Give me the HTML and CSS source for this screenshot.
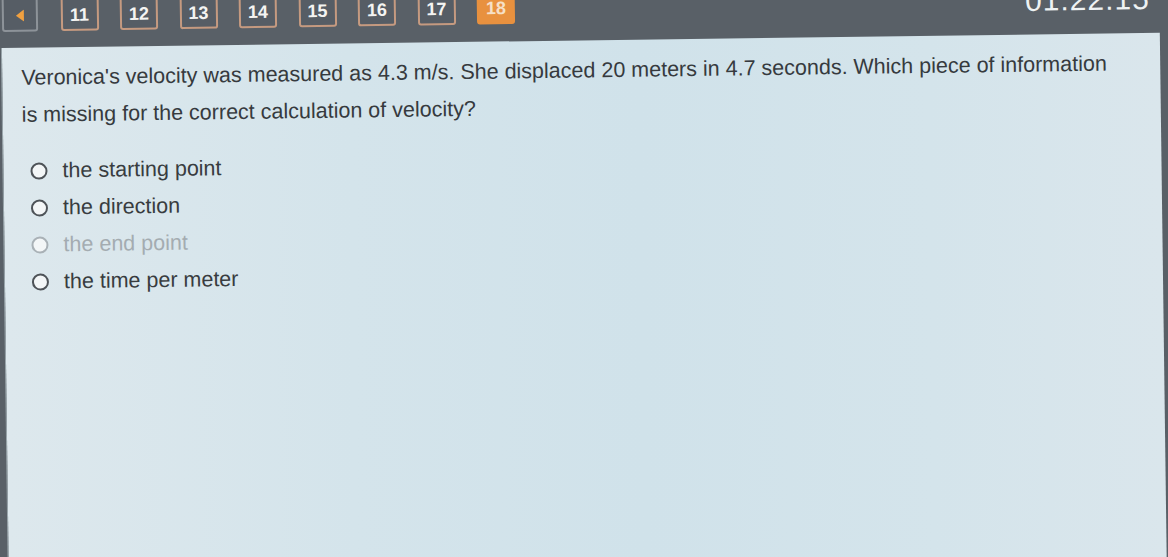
FILE: index.html
```html
<!DOCTYPE html>
<html lang="en">
<head>
<meta charset="utf-8">
<title>Question 18</title>
<link rel="stylesheet" href="styles.css">
</head>
<body>
<header class="topbar">
  <nav class="pager">
    <button class="pg back" aria-label="Previous"><svg width="10" height="12" viewBox="0 0 10 12"><polygon points="9,0 9,12 1,6" fill="#f0a040"/></svg></button>
    <button class="pg num">11</button>
    <button class="pg num">12</button>
    <button class="pg num">13</button>
    <button class="pg num">14</button>
    <button class="pg num">15</button>
    <button class="pg num">16</button>
    <button class="pg num">17</button>
    <button class="pg num current">18</button>
  </nav>
  <div class="timer">01:22:15</div>
</header>
<main class="card">
  <p class="question">Veronica's velocity was measured as 4.3 m/s. She displaced 20 meters in 4.7 seconds. Which piece of information is missing for the correct calculation of velocity?</p>
  <ul class="options">
    <li class="option"><span class="radio"></span><span>the starting point</span></li>
    <li class="option"><span class="radio"></span><span>the direction</span></li>
    <li class="option faded"><span class="radio"></span><span>the end point</span></li>
    <li class="option"><span class="radio"></span><span>the time per meter</span></li>
  </ul>
</main>
</body>
</html>
```
FILE: styles.css
```css
html, body {
  margin: 0;
  padding: 0;
}
body {
  width: 1168px;
  height: 557px;
  overflow: hidden;
  background: #596067;
  font-family: "Liberation Sans", Arial, sans-serif;
}
.topbar {
  height: 44px;
  display: flex;
  justify-content: space-between;
  align-items: flex-start;
  transform: rotate(-0.9deg);
  transform-origin: 0 50%;
}
.pager {
  display: flex;
  gap: 21.5px;
  margin-top: -6px;
  padding-left: 2px;
}
.pg {
  box-sizing: border-box;
  width: 38px;
  height: 38px;
  border-radius: 3px;
  background: #565d65;
  color: #f4f4f2;
  font-family: "Liberation Sans", Arial, sans-serif;
  font-weight: bold;
  font-size: 18px;
  display: flex;
  align-items: center;
  justify-content: center;
  padding: 6px 0 0;
  margin: 0;
}
.back {
  width: 36px;
  border: 2px solid #8d9399;
  margin-right: 1px;
}
.num {
  border: 2px solid #c59a80;
}
.current {
  background: #e8913f;
  border-color: #e8913f;
  color: #f6e0c8;
}
.timer {
  margin-top: 2px;
  margin-right: 18px;
  color: #eef2f3;
  font-size: 30px;
  line-height: 30px;
  letter-spacing: 1px;
}
.card {
  margin-left: 5px;
  margin-top: 4px;
  width: 1159px;
  height: 570px;
  box-sizing: border-box;
  padding: 12px 17px 0 19px;
  background: linear-gradient(90deg, #dde8ed 0%, #d4e4eb 30%, #d0e2ea 55%, #d4e4eb 80%, #dae6ec 100%);
  border-left: 1px solid #9aa6ac;
  transform: rotate(-0.75deg);
  transform-origin: 0 55%;
}
.question {
  margin: 0;
  max-width: 1095px;
  font-size: 21.5px;
  line-height: 37px;
  color: #363a3e;
}
.options {
  list-style: none;
  margin: 19px 0 0;
  padding: 0;
}
.option {
  display: flex;
  align-items: center;
  height: 37px;
  font-size: 21.5px;
  color: #383c40;
}
.radio {
  box-sizing: border-box;
  width: 17px;
  height: 17px;
  border: 2px solid #4e5358;
  border-radius: 50%;
  background: #f3f6f7;
  margin: 0 15px 0 8px;
}
.faded {
  color: #a4acb1;
}
.faded .radio {
  border-color: #a9b1b6;
}
```
